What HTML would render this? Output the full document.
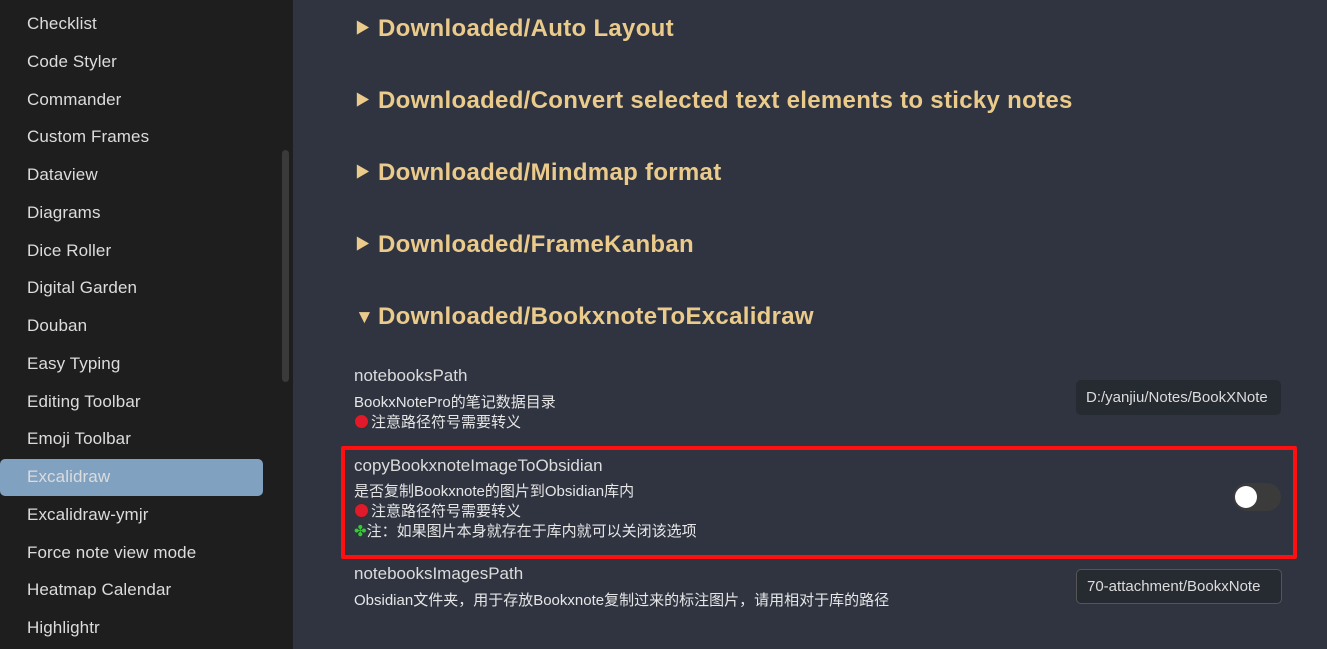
<!DOCTYPE html>
<html><head><meta charset="utf-8"><style>
*{margin:0;padding:0;box-sizing:border-box}
body{width:1327px;height:649px;overflow:hidden;background:#2f3440;font-family:"Liberation Sans","Noto Sans CJK SC",sans-serif;position:relative}
#side{position:absolute;left:0;top:0;width:293px;height:649px;background:#1e1e1e}
.it{position:absolute;left:27px;font-size:17px;color:#dcdcdc;line-height:20px;letter-spacing:0.1px}
#sel{position:absolute;left:0;top:459px;width:263px;height:37px;background:#81a1c1;border-radius:5px}
#sb{position:absolute;left:282px;top:150px;width:7px;height:232px;background:#3a3a3a;border-radius:4px}
.h{position:absolute;left:355px;font-size:24px;font-weight:bold;color:#ebcb8b;line-height:30px;white-space:nowrap;letter-spacing:0.3px}
.h span{display:inline-block;width:23px;font-size:15px;vertical-align:3px}
.n{position:absolute;left:354px;font-size:17px;color:#dcdcdc;line-height:20px}
.d{position:absolute;left:354px;font-size:15px;color:#e6e6e6;line-height:20px}
.dot{display:inline-block;width:15px;height:15px;border-radius:50%;background:#e0192b;border:1px solid #333;vertical-align:-2px;margin-right:2px}
.inp{position:absolute;background:#262a31;border-radius:5px;color:#dcdcdc;font-size:15px;line-height:35px;padding-left:10px;padding-right:8px;overflow:hidden;white-space:nowrap}
#box{position:absolute;left:341px;top:446px;width:956px;height:113px;border:4px solid #ff1010;border-radius:2px}
</style></head><body>
<div id="side">
<div id="sel"></div>
<div class="it" style="top:14px">Checklist</div>
<div class="it" style="top:52px">Code Styler</div>
<div class="it" style="top:90px">Commander</div>
<div class="it" style="top:127px">Custom Frames</div>
<div class="it" style="top:165px">Dataview</div>
<div class="it" style="top:203px">Diagrams</div>
<div class="it" style="top:241px">Dice Roller</div>
<div class="it" style="top:278px">Digital Garden</div>
<div class="it" style="top:316px">Douban</div>
<div class="it" style="top:354px">Easy Typing</div>
<div class="it" style="top:392px">Editing Toolbar</div>
<div class="it" style="top:429px">Emoji Toolbar</div>
<div class="it" style="top:467px">Excalidraw</div>
<div class="it" style="top:505px">Excalidraw-ymjr</div>
<div class="it" style="top:543px">Force note view mode</div>
<div class="it" style="top:580px">Heatmap Calendar</div>
<div class="it" style="top:618px">Highlightr</div>
<div id="sb"></div>
</div>
<div class="h" style="top:14px"><span>▶</span>Downloaded/Auto Layout</div>
<div class="h" style="top:86px"><span>▶</span>Downloaded/Convert selected text elements to sticky notes</div>
<div class="h" style="top:158px"><span>▶</span>Downloaded/Mindmap format</div>
<div class="h" style="top:230px"><span>▶</span>Downloaded/FrameKanban</div>
<div class="h" style="top:302px"><span style="font-size:19px;vertical-align:1px">▼</span>Downloaded/BookxnoteToExcalidraw</div>

<div class="n" style="top:366px">notebooksPath</div>
<div class="d" style="top:393px">BookxNotePro的笔记数据目录<br><span class="dot"></span>注意路径符号需要转义</div>
<div class="inp" style="left:1076px;top:380px;width:205px">D:/yanjiu/Notes/BookXNote</div>

<div id="box"></div>
<div class="n" style="top:456px">copyBookxnoteImageToObsidian</div>
<div class="d" style="top:482px">是否复制Bookxnote的图片到Obsidian库内<br><span class="dot"></span>注意路径符号需要转义<br><span style="color:#3c3">✤</span>注：如果图片本身就存在于库内就可以关闭该选项</div>
<div style="position:absolute;left:1233px;top:483px;width:48px;height:28px;border-radius:14px;background:#3b3b3b"></div>
<div style="position:absolute;left:1235px;top:486px;width:22px;height:22px;border-radius:50%;background:#fff"></div>

<div class="n" style="top:564px">notebooksImagesPath</div>
<div class="d" style="top:591px">Obsidian文件夹，用于存放Bookxnote复制过来的标注图片，请用相对于库的路径</div>
<div class="inp" style="left:1076px;top:569px;width:206px;border:1px solid #555;line-height:33px">70-attachment/BookxNote</div>
</body></html>
